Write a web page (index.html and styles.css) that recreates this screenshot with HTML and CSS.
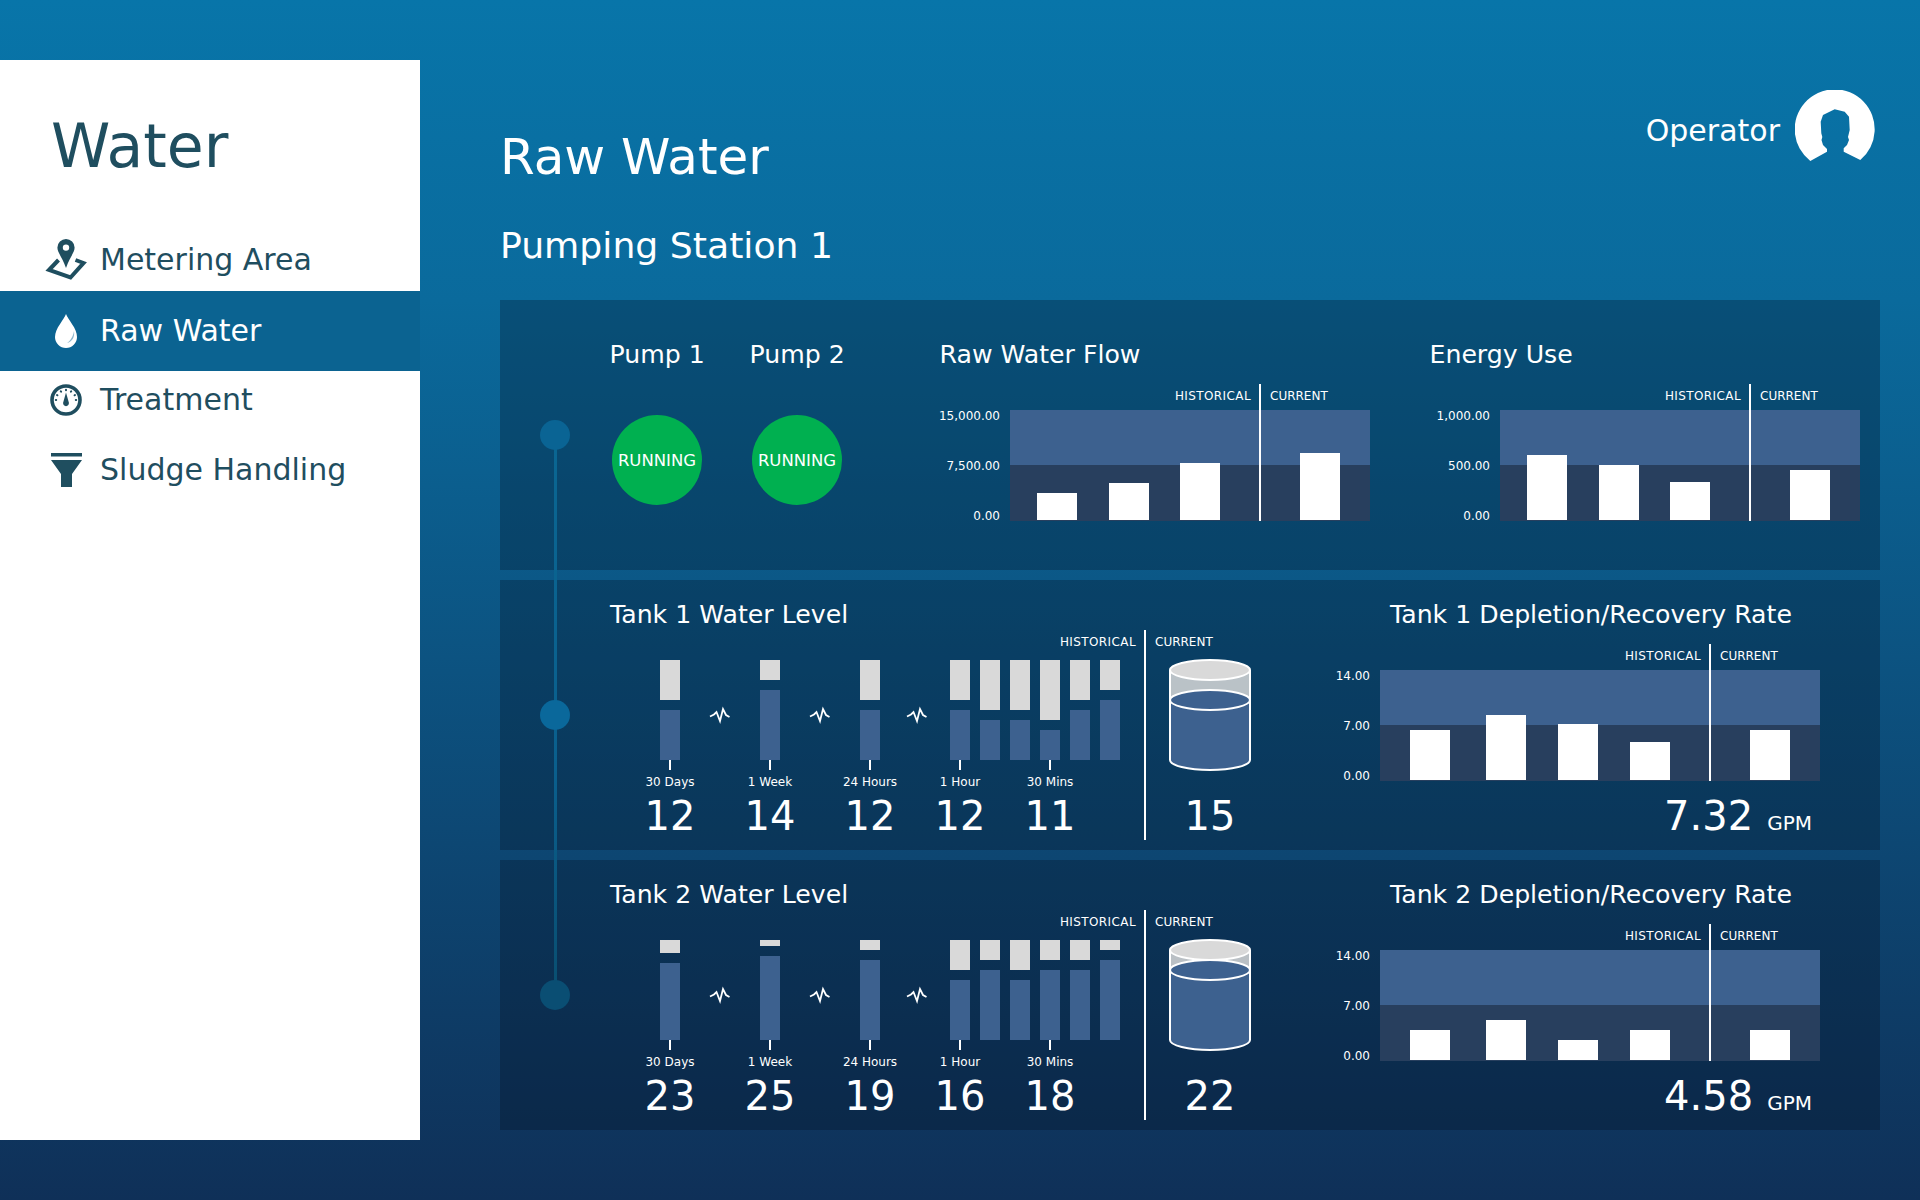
FILE: index.html
```html
<!DOCTYPE html>
<html lang="en">
<head>
<meta charset="utf-8">
<title>Water - Raw Water</title>
<link rel="stylesheet" href="styles.css">
</head>
<body>
<div class="app">
  <aside class="sidebar">
    <h1 class="brand">Water</h1>
    <nav class="nav">
      <a class="nav-item nav-metering">
        <span class="nav-icon"><svg width="42" height="42" viewBox="0 0 42 42"><path fill="#1f4e5f" fill-rule="evenodd" d="M21 0a8.6 8.6 0 0 1 8.6 8.6c0 5-4.6 9-8.6 20.4C17 17.600 12.400 13.600 12.400 8.600A8.600 8.600 0 0 1 21 0zm0 5.400a3.200 3.200 0 1 0 0 6.400 3.200 3.200 0 0 0 0-6.400z"/><path fill="none" stroke="#1f4e5f" stroke-width="4" d="M13.500 21 4 31l21.500 7.500L38.500 24l-8-3"/></svg></span>
        <span>Metering Area</span>
      </a>
      <a class="nav-item nav-active">
        <span class="nav-icon"><svg width="22" height="34" viewBox="0 0 22 34"><path fill="#fff" d="M11 0c2 6 11 14 11 23a11 11 0 0 1-22 0C0 14 9 6 11 0z"/><path fill="#8fb6cc" d="M19 17c1 6-2 11-7 12 3-2 6-6 7-12z"/></svg></span>
        <span>Raw Water</span>
      </a>
      <a class="nav-item nav-treatment">
        <span class="nav-icon"><svg width="32" height="32" viewBox="0 0 32 32"><circle cx="16" cy="16" r="14" fill="none" stroke="#1f4e5f" stroke-width="3.600"/><path fill="#1f4e5f" d="M16 8.500l2.800 10a2.900 2.900 0 1 1-5.600 0z"/><path stroke="#1f4e5f" stroke-width="2" stroke-linecap="round" fill="none" d="M16 5.800v.4M10.800 7.300l.3.4M21.200 7.300l-.3.4M7 11l.4.3M25 11l-.4.3M5.800 16h.4M25.800 16h.4"/></svg></span>
        <span>Treatment</span>
      </a>
      <a class="nav-item nav-sludge">
        <span class="nav-icon"><svg width="31" height="34" viewBox="0 0 31 34"><path fill="#1f4e5f" d="M0 0h31v3.500H0zM0 7h31L21 21v13H10V21z"/></svg></span>
        <span>Sludge Handling</span>
      </a>
    </nav>
  </aside>

  <main class="main">
    <header class="page-head">
      <div>
        <h2 class="page-title">Raw Water</h2>
        <h3 class="station-title">Pumping Station 1</h3>
      </div>
      <div class="user">
        <span>Operator</span>
        <svg width="80" height="80" viewBox="0 0 80 80"><path fill="#fff" d="M15.300 71A40 40 0 1 1 65.300 70L48.700 61.700V58.300L52 55 54 50 53 47 54.700 40 54 26.700 49.700 21.700 39.700 19.300 28 25 25.700 31.700 26.300 43.300 27.300 47 26.500 50 28 55 32 59V61.700z"/></svg>
      </div>
    </header>

    <div class="panels">
      <div class="timeline">
        <span class="dot dot-1"></span>
        <span class="dot dot-2"></span>
        <span class="dot dot-3"></span>
      </div>

      <section class="panel panel-pumps">
        <div class="pump">
          <div class="card-title">Pump 1</div>
          <div class="status">RUNNING</div>
        </div>
        <div class="pump pump-second">
          <div class="card-title">Pump 2</div>
          <div class="status">RUNNING</div>
        </div>
        <div class="chart chart-wide">
          <div class="card-title">Raw Water Flow</div>
          <div class="chart-body">
            <div class="legend"><span class="legend-hist">HISTORICAL</span><span class="legend-curr">CURRENT</span></div>
            <div class="chart-row">
              <div class="axis"><span>15,000.00</span><span>7,500.00</span><span>0.00</span></div>
              <div class="plot">
                <div class="bars">
                  <div class="bars-hist">
                    <i class="bar" style="height:27.500px"></i>
                    <i class="bar" style="height:37.500px"></i>
                    <i class="bar" style="height:57.500px"></i>
                  </div>
                  <div class="bars-curr"><i class="bar" style="height:67.500px"></i></div>
                </div>
                <span class="divider"></span>
              </div>
            </div>
          </div>
        </div>
        <div class="chart">
          <div class="card-title">Energy Use</div>
          <div class="chart-body">
            <div class="legend"><span class="legend-hist">HISTORICAL</span><span class="legend-curr">CURRENT</span></div>
            <div class="chart-row">
              <div class="axis"><span>1,000.00</span><span>500.00</span><span>0.00</span></div>
              <div class="plot">
                <div class="bars">
                  <div class="bars-hist">
                    <i class="bar" style="height:65px"></i>
                    <i class="bar" style="height:55.500px"></i>
                    <i class="bar" style="height:38.500px"></i>
                  </div>
                  <div class="bars-curr"><i class="bar" style="height:50.500px"></i></div>
                </div>
                <span class="divider"></span>
              </div>
            </div>
          </div>
        </div>
      </section>

      <section class="panel panel-tank">
        <div class="level">
          <div class="card-title">Tank 1 Water Level</div>
          <div class="level-body">
            <div class="level-hist">
              <div class="level-legend"><span class="legend-word">HISTORICAL</span></div>
              <div class="stacks">
                <div class="stack"><i class="empty" style="height:40px"></i><i class="fill"></i></div>
                <svg class="pulse" width="20" height="14" viewBox="0 0 20 14"><path fill="none" stroke="#fff" stroke-width="1.800" d="M0 8.500 4 6.500 6.500 4 10 13 13 1 16 7 19.500 9"/></svg>
                <div class="stack"><i class="empty" style="height:20px"></i><i class="fill"></i></div>
                <svg class="pulse" width="20" height="14" viewBox="0 0 20 14"><path fill="none" stroke="#fff" stroke-width="1.800" d="M0 8.500 4 6.500 6.500 4 10 13 13 1 16 7 19.500 9"/></svg>
                <div class="stack"><i class="empty" style="height:40px"></i><i class="fill"></i></div>
                <svg class="pulse pulse-short" width="20" height="14" viewBox="0 0 20 14"><path fill="none" stroke="#fff" stroke-width="1.800" d="M0 8.500 4 6.500 6.500 4 10 13 13 1 16 7 19.500 9"/></svg>
                <div class="stack-run">
                  <div class="stack"><i class="empty" style="height:40px"></i><i class="fill"></i></div>
                  <div class="stack"><i class="empty" style="height:50px"></i><i class="fill"></i></div>
                  <div class="stack"><i class="empty" style="height:50px"></i><i class="fill"></i></div>
                  <div class="stack"><i class="empty" style="height:60px"></i><i class="fill"></i></div>
                  <div class="stack"><i class="empty" style="height:40px"></i><i class="fill"></i></div>
                  <div class="stack"><i class="empty" style="height:30px"></i><i class="fill"></i></div>
                </div>
              </div>
              <div class="metrics">
                <div class="metric"><i class="tick"></i><span class="metric-label">30 Days</span><span class="metric-value">12</span></div>
                <div class="metric"><i class="tick"></i><span class="metric-label">1 Week</span><span class="metric-value">14</span></div>
                <div class="metric"><i class="tick"></i><span class="metric-label">24 Hours</span><span class="metric-value">12</span></div>
                <div class="metric metric-close"><i class="tick"></i><span class="metric-label">1 Hour</span><span class="metric-value">12</span></div>
                <div class="metric"><i class="tick"></i><span class="metric-label">30 Mins</span><span class="metric-value">11</span></div>
              </div>
            </div>
            <div class="level-curr">
              <div class="level-legend-curr">CURRENT</div>
              <svg class="tank" width="84" height="114" viewBox="0 0 84 114"><path fill="#d9d9d9" fill-opacity=".85" d="M2 12v30h80V12z"/><ellipse cx="42" cy="12" rx="40" ry="10" fill="#d9d9d9" stroke="#fff" stroke-width="2"/><path fill="#3d618f" d="M2 42v60a40 10 0 0 0 80 0V42z"/><ellipse cx="42" cy="42" rx="40" ry="10" fill="#3d618f" stroke="#fff" stroke-width="2"/><path fill="none" stroke="#fff" stroke-width="2" d="M2 12v90a40 10 0 0 0 80 0V12"/></svg>
              <div class="metric-value metric-current">15</div>
            </div>
          </div>
        </div>
        <div class="rate">
          <div class="card-title rate-title">Tank 1 Depletion/Recovery Rate</div>
          <div class="chart-body rate-body">
            <div class="legend"><span class="legend-hist">HISTORICAL</span><span class="legend-curr">CURRENT</span></div>
            <div class="chart-row">
              <div class="axis"><span>14.00</span><span>7.00</span><span>0.00</span></div>
              <div class="plot">
                <div class="bars">
                  <div class="bars-hist">
                    <i class="bar" style="height:50px"></i>
                    <i class="bar bar-nudge" style="height:65px"></i>
                    <i class="bar" style="height:56px"></i>
                    <i class="bar" style="height:38px"></i>
                  </div>
                  <div class="bars-curr"><i class="bar" style="height:50px"></i></div>
                </div>
                <span class="divider"></span>
              </div>
            </div>
          </div>
          <div class="rate-value"><span class="metric-value">7.32</span><span class="rate-unit">GPM</span></div>
        </div>
      </section>

      <section class="panel panel-tank">
        <div class="level">
          <div class="card-title">Tank 2 Water Level</div>
          <div class="level-body">
            <div class="level-hist">
              <div class="level-legend"><span class="legend-word">HISTORICAL</span></div>
              <div class="stacks">
                <div class="stack"><i class="empty" style="height:12.500px"></i><i class="fill"></i></div>
                <svg class="pulse" width="20" height="14" viewBox="0 0 20 14"><path fill="none" stroke="#fff" stroke-width="1.800" d="M0 8.500 4 6.500 6.500 4 10 13 13 1 16 7 19.500 9"/></svg>
                <div class="stack"><i class="empty" style="height:5.500px"></i><i class="fill"></i></div>
                <svg class="pulse" width="20" height="14" viewBox="0 0 20 14"><path fill="none" stroke="#fff" stroke-width="1.800" d="M0 8.500 4 6.500 6.500 4 10 13 13 1 16 7 19.500 9"/></svg>
                <div class="stack"><i class="empty" style="height:10px"></i><i class="fill"></i></div>
                <svg class="pulse pulse-short" width="20" height="14" viewBox="0 0 20 14"><path fill="none" stroke="#fff" stroke-width="1.800" d="M0 8.500 4 6.500 6.500 4 10 13 13 1 16 7 19.500 9"/></svg>
                <div class="stack-run">
                  <div class="stack"><i class="empty" style="height:30px"></i><i class="fill"></i></div>
                  <div class="stack"><i class="empty" style="height:20px"></i><i class="fill"></i></div>
                  <div class="stack"><i class="empty" style="height:30px"></i><i class="fill"></i></div>
                  <div class="stack"><i class="empty" style="height:20px"></i><i class="fill"></i></div>
                  <div class="stack"><i class="empty" style="height:20px"></i><i class="fill"></i></div>
                  <div class="stack"><i class="empty" style="height:10px"></i><i class="fill"></i></div>
                </div>
              </div>
              <div class="metrics">
                <div class="metric"><i class="tick"></i><span class="metric-label">30 Days</span><span class="metric-value">23</span></div>
                <div class="metric"><i class="tick"></i><span class="metric-label">1 Week</span><span class="metric-value">25</span></div>
                <div class="metric"><i class="tick"></i><span class="metric-label">24 Hours</span><span class="metric-value">19</span></div>
                <div class="metric metric-close"><i class="tick"></i><span class="metric-label">1 Hour</span><span class="metric-value">16</span></div>
                <div class="metric"><i class="tick"></i><span class="metric-label">30 Mins</span><span class="metric-value">18</span></div>
              </div>
            </div>
            <div class="level-curr">
              <div class="level-legend-curr">CURRENT</div>
              <svg class="tank" width="84" height="114" viewBox="0 0 84 114"><path fill="#d9d9d9" fill-opacity=".85" d="M2 12v20h80V12z"/><ellipse cx="42" cy="12" rx="40" ry="10" fill="#d9d9d9" stroke="#fff" stroke-width="2"/><path fill="#3d618f" d="M2 32v70a40 10 0 0 0 80 0V32z"/><ellipse cx="42" cy="32" rx="40" ry="10" fill="#3d618f" stroke="#fff" stroke-width="2"/><path fill="none" stroke="#fff" stroke-width="2" d="M2 12v90a40 10 0 0 0 80 0V12"/></svg>
              <div class="metric-value metric-current">22</div>
            </div>
          </div>
        </div>
        <div class="rate">
          <div class="card-title rate-title">Tank 2 Depletion/Recovery Rate</div>
          <div class="chart-body rate-body">
            <div class="legend"><span class="legend-hist">HISTORICAL</span><span class="legend-curr">CURRENT</span></div>
            <div class="chart-row">
              <div class="axis"><span>14.00</span><span>7.00</span><span>0.00</span></div>
              <div class="plot">
                <div class="bars">
                  <div class="bars-hist">
                    <i class="bar" style="height:30px"></i>
                    <i class="bar bar-nudge" style="height:40px"></i>
                    <i class="bar" style="height:20px"></i>
                    <i class="bar" style="height:30px"></i>
                  </div>
                  <div class="bars-curr"><i class="bar" style="height:30px"></i></div>
                </div>
                <span class="divider"></span>
              </div>
            </div>
          </div>
          <div class="rate-value"><span class="metric-value">4.58</span><span class="rate-unit">GPM</span></div>
        </div>
      </section>
    </div>
  </main>
</div>
</body>
</html>
```

FILE: styles.css
```css
* { box-sizing: border-box; }
html, body { margin: 0; padding: 0; }
body { font-family: "DejaVu Sans", sans-serif; color: #fff; }
h1, h2, h3 { margin: 0; font-weight: 400; }
i { display: block; }

.app {
  width: 1920px;
  height: 1200px;
  padding-top: 60px;
  display: flex;
  align-items: flex-start;
  background: linear-gradient(180deg, #0875a9 0%, #0a6a9c 25%, #0f3058 100%);
  overflow: hidden;
}

/* Sidebar */
.sidebar {
  width: 420px;
  height: 1080px;
  background: #fff;
  color: #1f4e5f;
  flex: none;
}
.brand {
  font-size: 60px;
  line-height: 72px;
  padding: 50px 0 0 51px;
}
.nav { margin-top: 46px; }
.nav-item {
  display: flex;
  align-items: center;
  font-size: 30px;
  line-height: 36px;
  padding-left: 100px;
  position: relative;
}
.nav-icon {
  position: absolute;
  left: 0;
  top: 0;
  bottom: 0;
  width: 132px;
  display: flex;
  align-items: center;
  justify-content: center;
}
.nav-metering { height: 63px; }
.nav-active { height: 80px; background: #0b6391; color: #fff; }
.nav-treatment { height: 58px; }
.nav-sludge { height: 82px; }

/* Main column */
.main {
  flex: 1;
  padding: 0 40px 0 80px;
}
.page-head {
  height: 240px;
  display: flex;
  justify-content: space-between;
  align-items: flex-start;
}
.page-title {
  font-size: 50px;
  line-height: 60px;
  margin-top: 67px;
}
.station-title {
  font-size: 36.200px;
  line-height: 44px;
  margin-top: 37px;
}
.user {
  display: flex;
  align-items: center;
  gap: 15px;
  font-size: 30px;
  margin: 30px 5px 0 0;
}
.user svg { display: block; }

/* Panels */
.panels { position: relative; display: flex; flex-direction: column; gap: 10px; }
.panel {
  height: 270px;
  background: rgba(2, 12, 24, 0.28);
  display: flex;
}
.timeline {
  position: absolute;
  left: 40px;
  top: 120px;
  bottom: 120px;
  width: 30px;
  display: flex;
  flex-direction: column;
  justify-content: space-between;
}
.timeline::before {
  content: "";
  position: absolute;
  left: 13.500px;
  width: 3px;
  top: 15px;
  bottom: 15px;
  background: linear-gradient(180deg, #0a6692, #0a5f8d 60%, #094e70);
}
.dot { position: relative; display: block; width: 30px; height: 30px; border-radius: 50%; }
.dot-1 { background: #0a6494; }
.dot-2 { background: #0a689b; }
.dot-3 { background: #0a4e73; }

.card-title { font-size: 25.200px; line-height: 30px; white-space: nowrap; }

/* Pumps row */
.panel-pumps { padding: 40px 0 0 109.500px; }
.pump { width: 140px; flex: none; }
.pump-second { width: 190px; }
.status {
  width: 90px;
  height: 90px;
  margin: 45px 0 0 2.500px;
  border-radius: 50%;
  background: #00b050;
  display: flex;
  align-items: center;
  justify-content: center;
  font-size: 16.500px;
  white-space: nowrap;
}

/* Bar charts */
.chart { flex: none; }
.chart-wide { width: 490px; }
.chart-body { --split: 250px; --plot: 360px; --axis: 60.500px; margin-top: 14px; }
.legend {
  display: flex;
  height: 26px;
  margin-left: calc(var(--axis) + 10px);
  width: var(--plot);
  font-size: 12px;
  line-height: 25px;
}
.legend-hist { width: var(--split); text-align: right; padding-right: 9px; letter-spacing: .4px; }
.legend-curr { padding-left: 10px; }
.chart-row { display: flex; gap: 10px; }
.axis {
  width: var(--axis);
  height: 112px;
  display: flex;
  flex-direction: column;
  justify-content: space-between;
  align-items: flex-end;
  font-size: 12px;
  line-height: 12px;
  flex: none;
}
.plot {
  position: relative;
  width: var(--plot);
  height: 111px;
  background: linear-gradient(180deg, #3d618f 0, #3d618f 55px, #283f5e 55px, #283f5e 100%);
}
.bars {
  position: absolute;
  inset: 0 0 1px 0;
  display: flex;
  align-items: flex-end;
}
.bars-hist {
  width: var(--split);
  padding-left: 27px;
  display: flex;
  align-items: flex-end;
  gap: 31.500px;
}
.bars-curr { padding-left: 40px; }
.bar { width: 40px; background: #fff; }
.divider {
  position: absolute;
  left: calc(var(--split) - 1px);
  width: 2px;
  top: -26px;
  bottom: 0;
  background: #fff;
}

/* Tank panels */
.panel-tank { padding: 20px 0 0 110px; }
.level { width: 700px; flex: none; }
.level-body { display: flex; margin-top: 0; height: 210px; }
.level-hist {
  width: 536px;
  flex: none;
  border-right: 2px solid #fff;
}
.level-legend {
  height: 30px;
  line-height: 24px;
  font-size: 12px;
  text-align: right;
  padding-right: 8px;
}
.legend-word { letter-spacing: .4px; }
.stacks {
  height: 100px;
  padding-left: 50px;
  display: flex;
  align-items: center;
}
.stack { width: 20px; height: 100px; display: flex; flex-direction: column; gap: 10px; flex: none; }
.empty { background: #d9d9d9; flex: none; }
.fill { background: #3d618f; flex: 1; }
.pulse { width: 80px; flex: none; padding: 0 30px; margin-top: 10px; overflow: visible; box-sizing: border-box; height: 14px; }
.pulse-short { width: 70px; padding: 0 23px 0 27px; }
.stack-run { display: flex; gap: 10px; }
.metrics { display: flex; gap: 80px; padding-left: 50px; }
.metric {
  width: 20px;
  flex: none;
  display: flex;
  flex-direction: column;
  align-items: center;
}
.metric-close { margin-left: -10px; margin-right: -10px; }
.tick { width: 2px; height: 10px; background: #fff; flex: none; }
.metric-label { font-size: 12px; line-height: 24px; white-space: nowrap; }
.metric-value { font-size: 40px; line-height: 44px; white-space: nowrap; }
.level-curr { padding-left: 9px; position: relative; width: 120px; }
.level-legend-curr { height: 28px; line-height: 24px; font-size: 12px; }
.tank { display: block; margin-left: 13px; }
.metric-current { width: 84px; margin: 22px 0 0 13px; text-align: center; }

/* Rate column */
.rate { width: 510px; flex: none; }
.rate-title { padding-left: 80px; }
.rate-body { --split: 330px; --plot: 440px; --axis: 60px; margin-top: 14px; }
.rate-body .bars-hist { padding-left: 30px; gap: 32px; }
.rate-body .bars-curr { padding-left: 40px; }
.bar-nudge { margin-left: 4px; }
.rate-value {
  display: flex;
  justify-content: flex-end;
  align-items: baseline;
  gap: 14px;
  padding-right: 8px;
  margin-top: 12px;
}
.rate-unit { font-size: 20px; }
```
